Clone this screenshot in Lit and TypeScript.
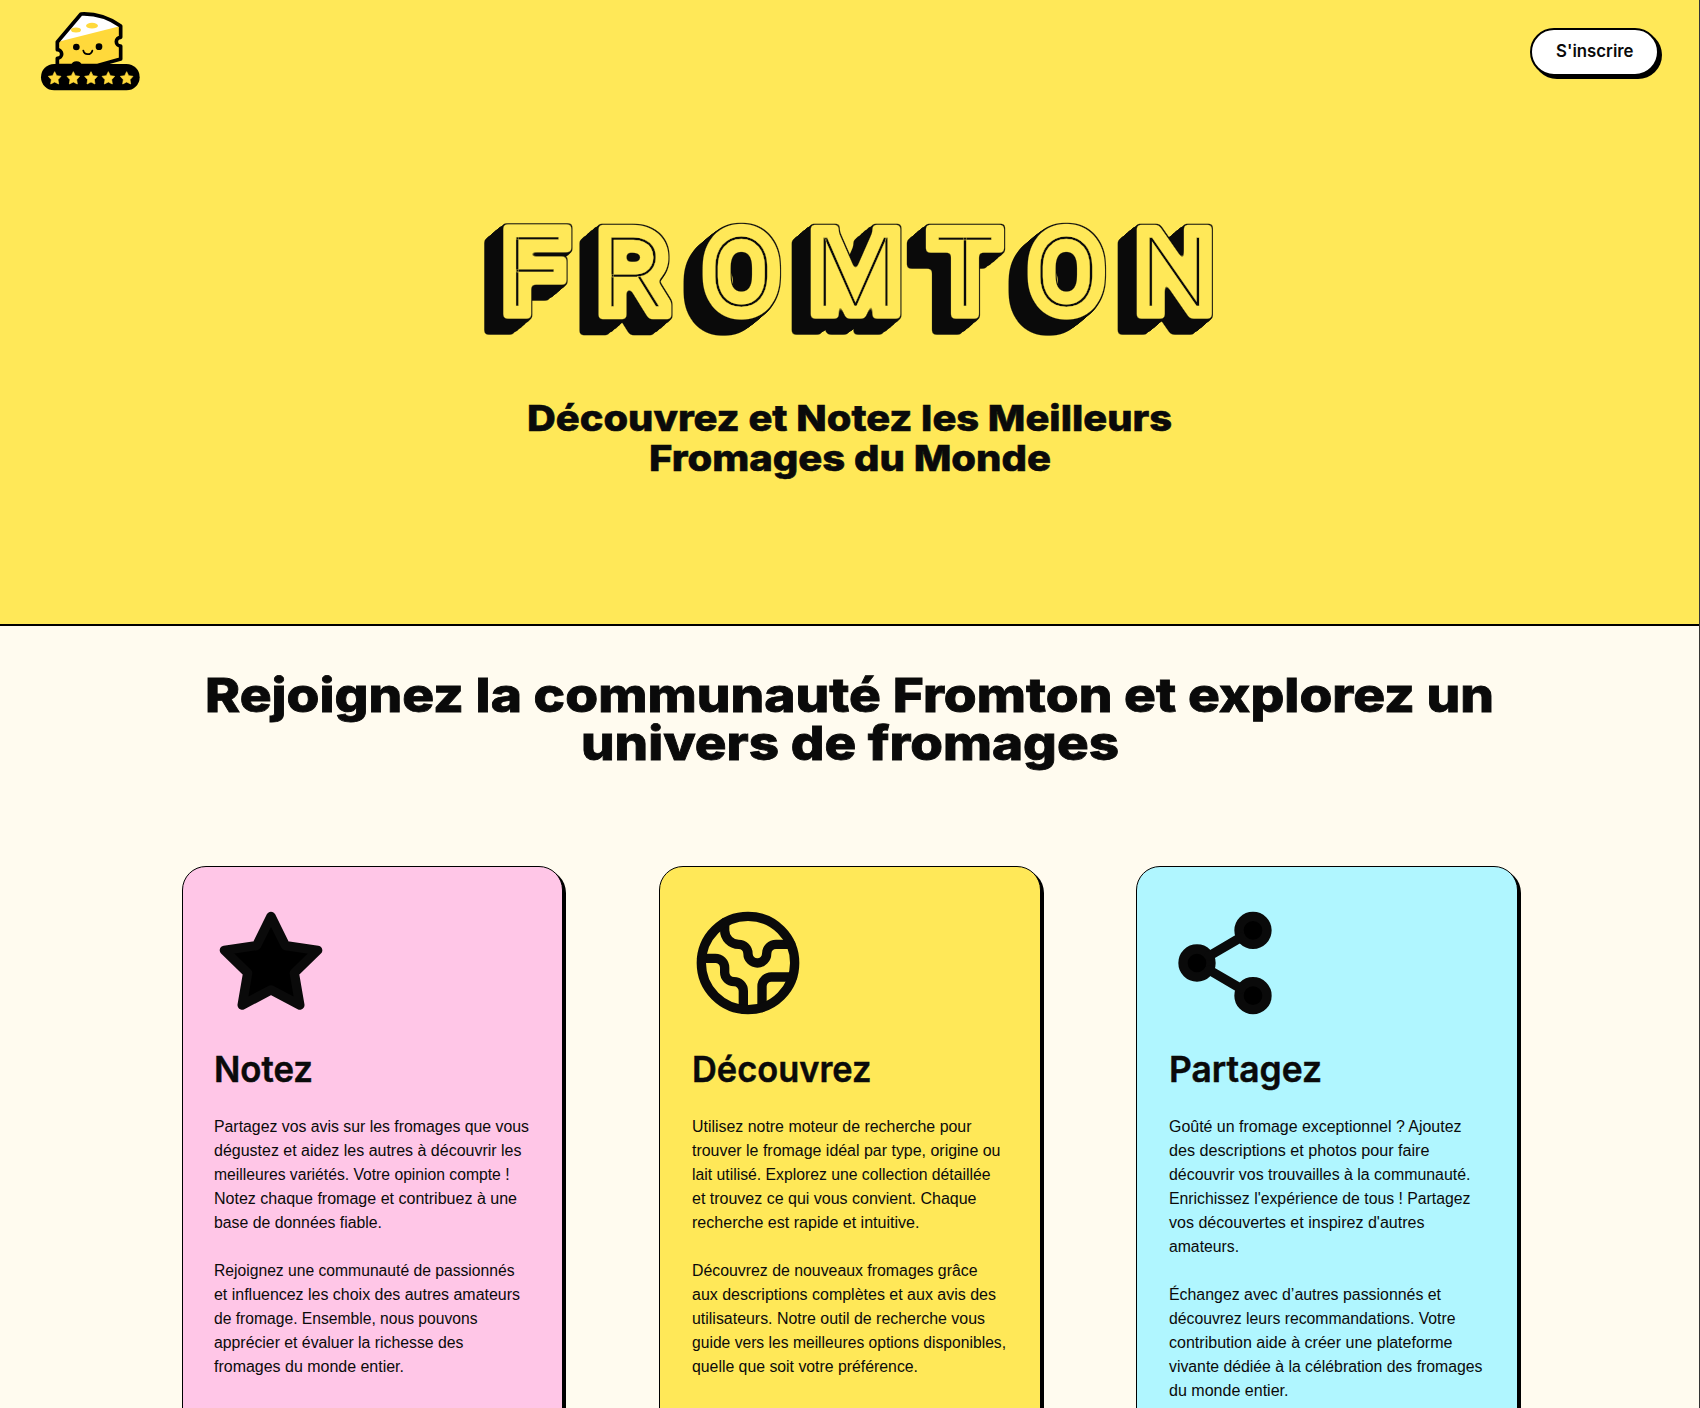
import { LitElement, html, css, svg } from "lit";
import { customElement, property } from "lit/decorators.js";

type Line = [string, number];

/** One line of type set to an exact measure. */
@customElement("fit-line")
class FitLine extends LitElement {
  @property() text = "";
  @property({ type: Number }) measure = 100;
  @property({ type: Number }) lead = 24;
  @property({ type: Number }) base = 17;
  static styles = css`
    :host { display: block; }
    svg { display: block; overflow: visible; }
    text { fill: currentColor; font: inherit; stroke: currentColor; stroke-width: var(--embolden, 0); }
  `;
  render() {
    return html`<svg width=${this.measure} height=${this.lead}>
      <text x="0" y=${this.base} textLength=${this.measure} lengthAdjust="spacingAndGlyphs">${this.text}</text>
    </svg>`;
  }
}

@customElement("cheese-logo")
class CheeseLogo extends LitElement {
  static styles = css`
    :host { display: block; }
    svg { display: block; }
  `;
  render() {
    const star = "M0 -19 L6 -7 L19 -5 L10 5 L12 18 L0 12 L-12 18 L-10 5 L-19 -5 L-6 -7Z";
    return html`<svg width="120" height="100" viewBox="0 0 360 300">
      <path d="M82 126 L153 42 C195 40 238 54 272 78 L272 112 A13 13 0 0 0 272 138 L272 177 L200 197 L82 197 L82 175 A13 13 0 0 0 82 149Z" fill="#ffd93b" />
      <path d="M82 126 L153 42 C195 40 238 54 272 78Z" fill="#fff" />
      <ellipse cx="138" cy="90" rx="15" ry="7.500" fill="#ffd93b" />
      <ellipse cx="186" cy="77" rx="18" ry="8.500" fill="#ffd93b" />
      <path d="M82 126 L153 42 C195 40 238 54 272 78 L272 112 A13 13 0 0 0 272 138 L272 177 L200 197 L82 197 L82 175 A13 13 0 0 0 82 149Z" fill="none" stroke="#000" stroke-width="11" stroke-linejoin="round" />
      <circle cx="139" cy="141" r="10" /><circle cx="207" cy="140" r="10" />
      <path d="M160 152 C163 166 183 166 187 152" fill="none" stroke="#000" stroke-width="5.500" stroke-linecap="round" />
      <path d="M123 197 A17 17 0 0 1 156 197Z" />
      <rect x="33" y="192" width="296" height="79" rx="39.500" />
      ${[74, 130, 183, 235, 290].map((x) => svg`<path d=${star} transform="translate(${x} 234)" fill="#ffd93b" stroke="#ffd93b" stroke-width="2" stroke-linejoin="round" />`)}
    </svg>`;
  }
}

@customElement("word-mark")
class WordMark extends LitElement {
  static styles = css`
    :host { display: block; }
    svg { display: block; overflow: visible; }
    .letters { font-family: Roboto, "Liberation Sans", sans-serif; font-weight: 100; font-size: 97px; }
    .body { stroke: #000; stroke-width: 25.5px; stroke-linejoin: miter; stroke-miterlimit: 1.5; }
    .line { fill: #0a0a0a; stroke: #ffe858; stroke-width: 0.3px; }
  `;
  render() {
    return html`<svg width="760" height="140" viewBox="470 210 760 140" role="img">
      <defs>
        <filter id="solid" filterUnits="userSpaceOnUse" x="450" y="190" width="800" height="180" color-interpolation-filters="sRGB">
          <feGaussianBlur in="SourceAlpha" stdDeviation="2.2" />
          <feComponentTransfer result="face"><feFuncA type="linear" slope="5" intercept="-2" /></feComponentTransfer>
          <feMorphology in="face" operator="dilate" radius="1" result="s0" />
          <feOffset in="s0" dx="-1" dy="1" result="o1" /><feMerge result="s1"><feMergeNode in="s0" /><feMergeNode in="o1" /></feMerge>
          <feOffset in="s1" dx="-2" dy="2" result="o2" /><feMerge result="s2"><feMergeNode in="s1" /><feMergeNode in="o2" /></feMerge>
          <feOffset in="s2" dx="-4" dy="3" result="o3" /><feMerge result="s3"><feMergeNode in="s2" /><feMergeNode in="o3" /></feMerge>
          <feOffset in="s3" dx="-4" dy="3" result="o4" /><feMerge result="s4"><feMergeNode in="s3" /><feMergeNode in="o4" /></feMerge>
          <feOffset in="s4" dx="-7" dy="6" result="o5" /><feMerge result="s5"><feMergeNode in="s4" /><feMergeNode in="o5" /></feMerge>
          <feFlood flood-color="#0a0a0a" /><feComposite in2="s5" operator="in" result="depth" />
          <feFlood flood-color="#ffe858" /><feComposite in2="face" operator="in" result="front" />
          <feMerge><feMergeNode in="depth" /><feMergeNode in="front" /></feMerge>
        </filter>
      </defs>
      <g filter="url(#solid)"><use href="#name" class="body" /></g>
      <g class="line"><text id="name" class="letters" x="506.500 602 709 814 936 1034 1140" y="306">FROMTON</text></g>
    </svg>`;
  }
}

const icons = {
  star: svg`<polygon fill="#000" points="12 2 15.09 8.26 22 9.27 17 14.14 18.18 21.02 12 17.77 5.820 21.02 7 14.14 2 9.27 8.91 8.26 12 2" />`,
  earth: svg`<path d="M21.54 15H17a2 2 0 0 0-2 2v4.54" /><path d="M7 3.34V5a3 3 0 0 0 3 3a2 2 0 0 1 2 2c0 1.1.9 2 2 2a2 2 0 0 0 2-2c0-1.1.9-2 2-2h3.17" /><path d="M11 21.95V18a2 2 0 0 0-2-2a2 2 0 0 1-2-2v-1a2 2 0 0 0-2-2H2.05" /><circle cx="12" cy="12" r="10" />`,
  share: svg`<g fill="#000"><circle cx="18" cy="5" r="3" /><circle cx="6" cy="12" r="3" /><circle cx="18" cy="19" r="3" /></g><path d="M8.59 13.51 15.42 17.49M15.41 6.51 8.59 10.49" />`,
};

interface Feature {
  tone: string;
  icon: unknown;
  title: Line;
  paragraphs: Line[][];
}

const features: Feature[] = [
  {
    tone: "pink", icon: icons.star, title: ["Notez", 99],
    paragraphs: [
      [["Partagez vos avis sur les fromages que vous", 315], ["dégustez et aidez les autres à découvrir les", 307.5], ["meilleures variétés. Votre opinion compte !", 295.5], ["Notez chaque fromage et contribuez à une", 303], ["base de données fiable.", 168]],
      [["Rejoignez une communauté de passionnés", 300.5], ["et influencez les choix des autres amateurs", 306], ["de fromage. Ensemble, nous pouvons", 263.5], ["apprécier et évaluer la richesse des", 249.5], ["fromages du monde entier.", 190]],
    ],
  },
  {
    tone: "yellow", icon: icons.earth, title: ["Découvrez", 179.5],
    paragraphs: [
      [["Utilisez notre moteur de recherche pour", 279.5], ["trouver le fromage idéal par type, origine ou", 308.5], ["lait utilisé. Explorez une collection détaillée", 298.5], ["et trouvez ce qui vous convient. Chaque", 284.5], ["recherche est rapide et intuitive.", 227.5]],
      [["Découvrez de nouveaux fromages grâce", 285.5], ["aux descriptions complètes et aux avis des", 304], ["utilisateurs. Notre outil de recherche vous", 293], ["guide vers les meilleures options disponibles,", 314], ["quelle que soit votre préférence.", 226]],
    ],
  },
  {
    tone: "cyan", icon: icons.share, title: ["Partagez", 153],
    paragraphs: [
      [["Goûté un fromage exceptionnel ? Ajoutez", 292.5], ["des descriptions et photos pour faire", 260.5], ["découvrir vos trouvailles à la communauté.", 301.5], ["Enrichissez l'expérience de tous ! Partagez", 301.5], ["vos découvertes et inspirez d'autres", 255.5], ["amateurs.", 70]],
      [["Échangez avec d’autres passionnés et", 272], ["découvrez leurs recommandations. Votre", 286.5], ["contribution aide à créer une plateforme", 283.5], ["vivante dédiée à la célébration des fromages", 313.5], ["du monde entier.", 119.5]],
    ],
  },
];

@customElement("app-root")
class AppRoot extends LitElement {
  static styles = css`
    :host { display: block; height: 1408px; overflow: hidden; background: #fffbef; color: #0a0a0a; font-family: Inter, "Liberation Sans", sans-serif; box-sizing: border-box; border-right: 1px solid #333; }
    * { box-sizing: border-box; }
    h1, h2, h3, p { margin: 0; }
    .hero { height: 626px; background: #ffe858; border-bottom: 2px solid #000; display: flex; flex-direction: column; align-items: center; }
    .bar { width: 100%; height: 104px; padding: 0 40px 0 30px; display: flex; justify-content: space-between; align-items: flex-start; }
    .join { margin-top: 28px; width: 129px; height: 48px; border: 2px solid #000; border-radius: 24px; background: #fff; box-shadow: 3px 3px 0 #000; padding: 0; display: flex; align-items: center; justify-content: center; color: #0a0a0a; font: 600 17px Inter, "Liberation Sans", sans-serif; }
    .mark { margin-top: 106px; }
    .tagline { margin-top: 49px; display: flex; flex-direction: column; align-items: center; font-size: 36px; font-weight: 800; --embolden: 0.6px; }
    .lead { padding-top: 48px; display: flex; flex-direction: column; align-items: center; font-size: 47px; font-weight: 800; --embolden: 0.8px; }
    .cards { margin-top: 96px; padding: 0 181px 0 182px; display: grid; grid-template-columns: repeat(3, 1fr); gap: 96px; }
    .card { height: 640px; padding: 40px 32px; border: 1px solid #000; border-radius: 24px; box-shadow: 3px 3px 0 #000; }
    .pink { background: #ffc6e7; }
    .yellow { background: #ffe858; }
    .cyan { background: #b0f6ff; }
    .icon { display: block; width: 112px; height: 112px; fill: none; stroke: #0a0a0a; stroke-width: 2; stroke-linecap: round; stroke-linejoin: round; }
    .title { margin-top: 30px; margin-left: -0.6px; font-size: 36px; font-weight: 600; --embolden: 0.5px; }
    .text { font-family: "Liberation Sans", Arial, sans-serif; font-size: 16px; margin-left: -0.6px; margin-bottom: 24px; }
    .card.cyan { margin-left: -0.4px; }
    .title + .text { margin-top: 26px; }
  `;
  render() {
    return html`
      <section class="hero">
        <header class="bar">
          <cheese-logo></cheese-logo>
          <button class="join"><fit-line text="S'inscrire" measure="77.5" lead="20" base="15"></fit-line></button>
        </header>
        <h1 class="mark"><word-mark></word-mark></h1>
        <h2 class="tagline">
          <fit-line text="Découvrez et Notez les Meilleurs" measure="645" lead="40" base="32"></fit-line>
          <fit-line text="Fromages du Monde" measure="402" lead="40" base="32"></fit-line>
        </h2>
      </section>
      <h2 class="lead">
        <fit-line text="Rejoignez la communauté Fromton et explorez un" measure="1289" lead="48" base="38"></fit-line>
        <fit-line text="univers de fromages" measure="538" lead="48" base="38"></fit-line>
      </h2>
      <section class="cards">
        ${features.map((f) => html`<article class="card ${f.tone}">
          <svg class="icon" viewBox="0 0 24 24">${f.icon}</svg>
          <h3 class="title"><fit-line .text=${f.title[0]} .measure=${f.title[1]} .lead=${40} .base=${33}></fit-line></h3>
          ${f.paragraphs.map((p) => html`<p class="text">${p.map(([t, w]) => html`<fit-line .text=${t} .measure=${w}></fit-line>`)}</p>`)}
        </article>`)}
      </section>
    `;
  }
}
